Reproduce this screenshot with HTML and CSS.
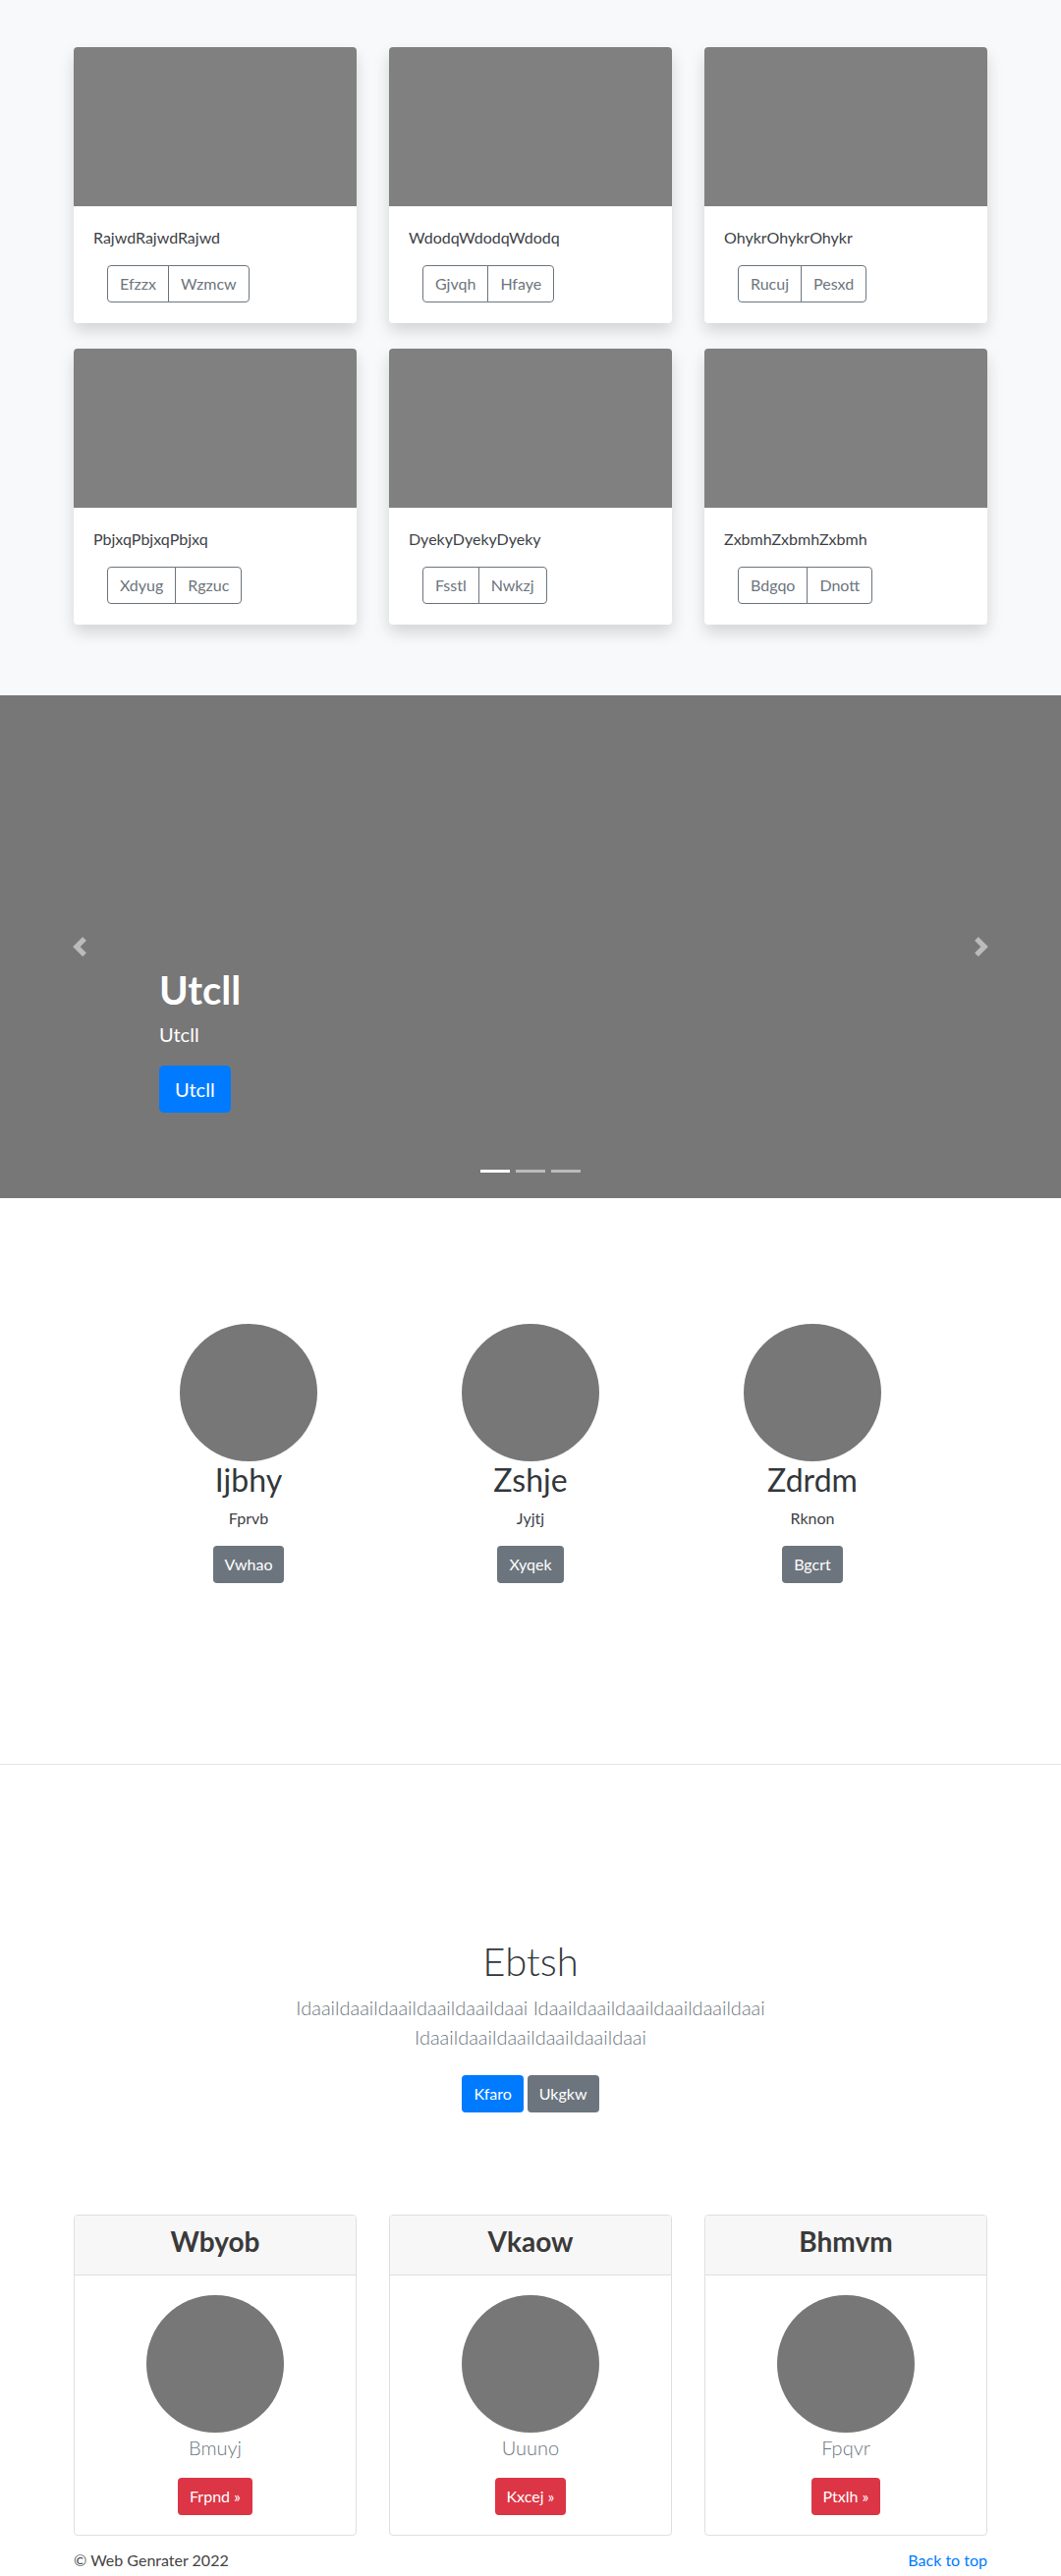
FILE: index.html
```html
<!DOCTYPE html>
<html lang="en">
<head>
<meta charset="utf-8">
<title>Web Genrater</title>
<link rel="stylesheet" href="styles.css">
</head>
<body>
<section class="album">
  <div class="container card-grid">
    <div class="album-card">
      <div class="thumb"></div>
      <div class="album-body">
        <p class="card-text">RajwdRajwdRajwd</p>
        <div class="btn-group"><button class="btn-outline">Efzzx</button><button class="btn-outline">Wzmcw</button></div>
      </div>
    </div>
    <div class="album-card">
      <div class="thumb"></div>
      <div class="album-body">
        <p class="card-text">WdodqWdodqWdodq</p>
        <div class="btn-group"><button class="btn-outline">Gjvqh</button><button class="btn-outline">Hfaye</button></div>
      </div>
    </div>
    <div class="album-card">
      <div class="thumb"></div>
      <div class="album-body">
        <p class="card-text">OhykrOhykrOhykr</p>
        <div class="btn-group"><button class="btn-outline">Rucuj</button><button class="btn-outline">Pesxd</button></div>
      </div>
    </div>
    <div class="album-card">
      <div class="thumb"></div>
      <div class="album-body">
        <p class="card-text">PbjxqPbjxqPbjxq</p>
        <div class="btn-group"><button class="btn-outline">Xdyug</button><button class="btn-outline">Rgzuc</button></div>
      </div>
    </div>
    <div class="album-card">
      <div class="thumb"></div>
      <div class="album-body">
        <p class="card-text">DyekyDyekyDyeky</p>
        <div class="btn-group"><button class="btn-outline">Fsstl</button><button class="btn-outline">Nwkzj</button></div>
      </div>
    </div>
    <div class="album-card">
      <div class="thumb"></div>
      <div class="album-body">
        <p class="card-text">ZxbmhZxbmhZxbmh</p>
        <div class="btn-group"><button class="btn-outline">Bdgqo</button><button class="btn-outline">Dnott</button></div>
      </div>
    </div>
  </div>
</section>

<section class="carousel">
  <a class="carousel-control prev" href="#">
    <svg class="chev" viewBox="0 0 8 8" width="20" height="20"><path d="M5.25 0l-4 4 4 4 1.5-1.5L4.25 4l2.5-2.5L5.25 0z"/></svg>
  </a>
  <a class="carousel-control next" href="#">
    <svg class="chev" viewBox="0 0 8 8" width="20" height="20"><path d="M2.75 0l-1.5 1.5L3.75 4l-2.5 2.5L2.75 8l4-4-4-4z"/></svg>
  </a>
  <div class="carousel-caption">
    <h1 class="caption-title">Utcll</h1>
    <p class="caption-text">Utcll</p>
    <div class="caption-action"><a class="btn btn-lg btn-primary" href="#">Utcll</a></div>
  </div>
  <ol class="indicators">
    <li class="active"></li>
    <li></li>
    <li></li>
  </ol>
</section>

<section class="marketing">
  <div class="marketing-row">
    <div class="feature">
      <div class="circle"></div>
      <h2 class="feature-title">Ijbhy</h2>
      <p class="feature-text">Fprvb</p>
      <a class="btn btn-secondary" href="#">Vwhao</a>
    </div>
    <div class="feature">
      <div class="circle"></div>
      <h2 class="feature-title">Zshje</h2>
      <p class="feature-text">Jyjtj</p>
      <a class="btn btn-secondary" href="#">Xyqek</a>
    </div>
    <div class="feature">
      <div class="circle"></div>
      <h2 class="feature-title">Zdrdm</h2>
      <p class="feature-text">Rknon</p>
      <a class="btn btn-secondary" href="#">Bgcrt</a>
    </div>
  </div>
</section>

<hr class="divider">

<section class="hero">
  <h1 class="hero-title">Ebtsh</h1>
  <p class="lead">Idaaildaaildaaildaaildaaildaai Idaaildaaildaaildaaildaaildaai Idaaildaaildaaildaaildaaildaai</p>
  <div class="hero-actions">
    <a class="btn btn-primary" href="#">Kfaro</a>
    <a class="btn btn-secondary" href="#">Ukgkw</a>
  </div>
</section>

<section class="deck">
  <div class="container card-grid">
    <div class="deck-card">
      <div class="deck-header"><h3 class="deck-title">Wbyob</h3></div>
      <div class="deck-body">
        <div class="circle"></div>
        <p class="deck-text">Bmuyj</p>
        <a class="btn btn-danger" href="#">Frpnd »</a>
      </div>
    </div>
    <div class="deck-card">
      <div class="deck-header"><h3 class="deck-title">Vkaow</h3></div>
      <div class="deck-body">
        <div class="circle"></div>
        <p class="deck-text">Uuuno</p>
        <a class="btn btn-danger" href="#">Kxcej »</a>
      </div>
    </div>
    <div class="deck-card">
      <div class="deck-header"><h3 class="deck-title">Bhmvm</h3></div>
      <div class="deck-body">
        <div class="circle"></div>
        <p class="deck-text">Fpqvr</p>
        <a class="btn btn-danger" href="#">Ptxlh »</a>
      </div>
    </div>
  </div>
</section>

<footer class="footer">
  <div class="container footer-row">
    <p class="footer-text">© Web Genrater 2022</p>
    <a class="footer-link" href="#">Back to top</a>
  </div>
</footer>
</body>
</html>
```

FILE: styles.css
```css
* { box-sizing: border-box; }

html, body {
  margin: 0;
  padding: 0;
}

body {
  font-family: Lato, "Open Sans", "Noto Sans", sans-serif;
  font-size: 16px;
  line-height: 1.5;
  color: #212529;
  background: #fff;
}

p, h1, h2, h3 { margin: 0; }

a { text-decoration: none; }

.container {
  width: 930px;
  margin: 0 auto;
}

.card-grid {
  display: grid;
  grid-template-columns: repeat(3, 1fr);
  column-gap: 33px;
  row-gap: 26px;
}

/* ---------- album ---------- */
.album {
  background: #f8f9fa;
  padding: 48px 0 72px;
}

.album-card {
  background: #fff;
  border-radius: 4px;
  box-shadow: 0 8px 16px rgba(0, 0, 0, 0.15);
  overflow: hidden;
}

.thumb {
  height: 162px;
  background: #808080;
}

.album-body {
  padding: 20px 20px 21px;
}

.card-text {
  margin-bottom: 16px;
  color: #3d4247;
}

.btn-group {
  display: inline-flex;
  margin-left: 14px;
}

.btn-outline {
  font: inherit;
  font-size: 16px;
  line-height: 24px;
  padding: 6px 12px;
  color: #6c757d;
  background: transparent;
  border: 1px solid #6c757d;
  border-radius: 4px;
}

.btn-group .btn-outline:first-child {
  border-top-right-radius: 0;
  border-bottom-right-radius: 0;
}

.btn-group .btn-outline + .btn-outline {
  margin-left: -1px;
  border-top-left-radius: 0;
  border-bottom-left-radius: 0;
}

/* ---------- buttons ---------- */
.btn {
  display: inline-block;
  font-size: 16px;
  line-height: 24px;
  padding: 7px 12px;
  border-radius: 4px;
  color: #fff;
}

.btn-lg {
  font-size: 20px;
  line-height: 30px;
  padding: 9px 16px;
  border-radius: 5px;
}

.btn-primary { background: #007bff; }
.btn-secondary { background: #6c757d; }
.btn-danger { background: #dc3545; }

/* ---------- carousel ---------- */
.carousel {
  position: relative;
  height: 512px;
  background: #777;
}

.carousel-control {
  position: absolute;
  top: 0;
  bottom: 0;
  width: 15%;
  display: flex;
  align-items: center;
  justify-content: center;
  opacity: 0.5;
}

.carousel-control.prev { left: 0; }
.carousel-control.next { right: 0; }

.chev { fill: #fff; display: block; }

.carousel-caption {
  position: absolute;
  left: 15%;
  right: 15%;
  bottom: 87px;
  color: #fff;
  text-align: left;
}

.caption-title {
  font-size: 40px;
  line-height: 48px;
  font-weight: 700;
  margin-bottom: 6px;
}

.caption-text {
  font-size: 20px;
  line-height: 30px;
  margin-bottom: 17px;
}

.caption-action { display: flex; }

.indicators {
  position: absolute;
  left: 0;
  right: 0;
  bottom: 26px;
  margin: 0;
  padding: 0;
  list-style: none;
  display: flex;
  justify-content: center;
  gap: 6px;
}

.indicators li {
  width: 30px;
  height: 3px;
  background: #fff;
  opacity: 0.5;
}

.indicators li.active { opacity: 1; }

/* ---------- marketing ---------- */
.marketing {
  padding: 128px 0 184px;
}

.marketing-row {
  width: 861px;
  margin: 0 auto;
  display: grid;
  grid-template-columns: repeat(3, 1fr);
}

.feature {
  text-align: center;
}

.circle {
  width: 140px;
  height: 140px;
  border-radius: 50%;
  background: #777;
  margin: 0 auto;
}

.feature-title {
  font-size: 32px;
  line-height: 38.4px;
  font-weight: 400;
  margin-bottom: 8px;
  color: #33373b;
}

.feature-text {
  margin-bottom: 16px;
  color: #3d4247;
}

.divider {
  margin: 0;
  border: 0;
  border-top: 1px solid #e5e5e5;
}

/* ---------- hero ---------- */
.hero {
  padding: 176px 0 0;
  text-align: center;
}

.hero-title {
  font-size: 40px;
  line-height: 48px;
  font-weight: 300;
  margin-bottom: 8px;
  color: #33373b;
}

.lead {
  width: 610px;
  margin: 0 auto;
  padding-bottom: 16px;
  font-size: 20px;
  line-height: 30px;
  font-weight: 300;
  color: #6c757d;
}

.hero-actions {
  display: flex;
  justify-content: center;
  gap: 4px;
  padding: 8px 0;
}

/* ---------- deck ---------- */
.deck {
  padding-top: 96px;
}

.deck-card {
  border: 1px solid #dfdfdf;
  border-radius: 4px;
  overflow: hidden;
  text-align: center;
}

.deck-header {
  background: #f7f7f7;
  border-bottom: 1px solid #dfdfdf;
  padding: 8px 20px 16px;
}

.deck-title {
  font-size: 28px;
  line-height: 36px;
  font-weight: 700;
  color: #3a3a3a;
}

.deck-body {
  padding: 20px;
}

.deck-text {
  font-size: 20px;
  line-height: 30px;
  font-weight: 300;
  color: #6c757d;
  margin-bottom: 16px;
}

/* ---------- footer ---------- */
.footer {
  padding: 13px 0 48px;
}

.footer-row {
  display: flex;
  justify-content: space-between;
  align-items: flex-start;
}

.footer-text { color: #444; }

.footer-link { color: #007bff; }
```
